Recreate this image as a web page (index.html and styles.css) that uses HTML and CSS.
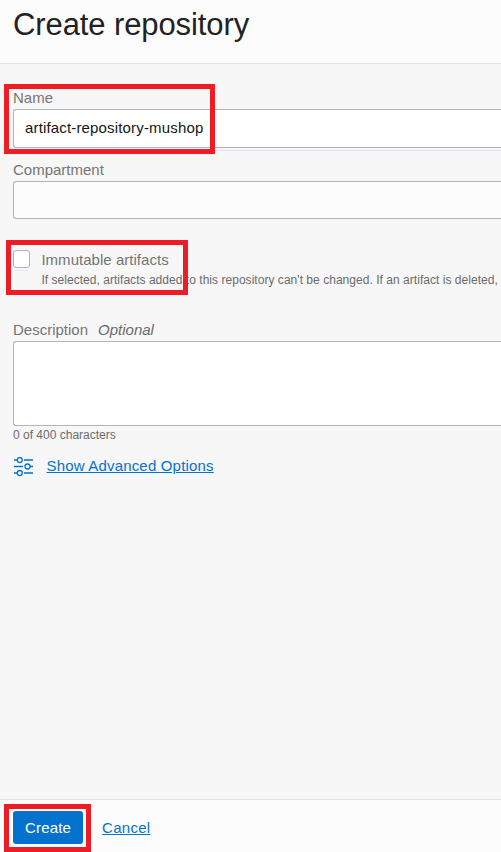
FILE: index.html
```html
<!DOCTYPE html>
<html lang="en">
<head>
<meta charset="utf-8">
<title>Create repository</title>
<link rel="stylesheet" href="styles.css">
</head>
<body>
<div class="panel">
  <header class="header"><h1>Create repository</h1></header>
  <main class="content">
    <label class="label" for="name">Name</label>
    <div class="input-line"><input class="field name" id="name" type="text" value="artifact-repository-mushop"></div>
    <div class="label compartment-label"><span>Compartment</span></div>
    <div class="field compartment"></div>
    <div class="check-row">
      <span class="checkbox"></span>
      <div class="check-copy">
        <div class="label"><span class="check-title">Immutable artifacts</span></div>
        <p class="help">If selected, artifacts added to this repository can't be changed. If an artifact is deleted,</p>
      </div>
    </div>
    <label class="label" for="desc">Description<em>Optional</em></label>
    <textarea class="field description" id="desc"></textarea>
    <p class="count"><span>0 of 400 characters</span></p>
    <div class="advanced">
      <svg width="20" height="20" viewBox="0 0 20 20" fill="none" stroke="#0572ce" stroke-width="1.3">
        <path d="M0 3h3M10 3h9M0 9.500h9M16 9.500h3M0 16h3M10 16h9"/>
        <circle cx="5.800" cy="3" r="2.500"/><circle cx="13.500" cy="9.500" r="2.500"/><circle cx="5.800" cy="16" r="2.500"/>
      </svg>
      <a class="link">Show Advanced Options</a>
    </div>
  </main>
  <footer class="footer">
    <button class="create" type="button"><span>Create</span></button>
    <a class="link">Cancel</a>
  </footer>
  <div class="marker marker-name"></div>
  <div class="marker marker-check"></div>
  <div class="marker marker-create"></div>
</div>
</body>
</html>
```
FILE: styles.css
```css
*, *::before { box-sizing: border-box; }
body { margin: 0; overflow: hidden; font: 15px/18px "Liberation Sans", Arial, sans-serif; color: #706e6b; background: #f7f7f7; }
.panel { position: relative; height: 852px; display: flex; flex-direction: column; overflow: hidden; }
.header { height: 64px; padding: 6px 13px 0; background: #fcfcfc; border-bottom: 1px solid #e3e3e3; }
h1 { margin: 0; font-size: 31px; line-height: 37px; font-weight: 400; letter-spacing: -.1px; color: #222; }
.content { flex: 1; padding: 25px 0 0 13px; white-space: nowrap; }
.label { display: block; height: 20px; color: #757575; }
.label em { margin-left: 10px; color: #6b6b6b; }
.field { display: block; width: 100%; border: 1px solid #aeb4c0; border-right: 0; border-radius: 3px 0 0 3px; background: #fff; }
.input-line { height: 42px; border-bottom: 1px solid #dce5f2; }
.name { height: 39px; padding: 0 11px 2px; font: 15px "Liberation Sans", Arial, sans-serif; letter-spacing: .16px; color: #161616; outline: 0; }
.compartment-label { margin-top: 10px; }
.compartment { height: 38px; background: #fcfcfc; }
.check-row { display: flex; gap: 11px; margin: 31px 0 30px; height: 41px; }
.checkbox { width: 17px; height: 21px; flex: none; background: linear-gradient(#dce9f7, #dce9f7) 2px 20px / 13px 1px no-repeat; }
.checkbox::before { content: ""; display: block; height: 18px; border: 1px solid #aeb4c0; border-radius: 3px; background: #fff; }
.check-copy { padding-left: .4px; }
.check-copy .label { height: 21px; padding-top: 1px; letter-spacing: .03px; }
.help, .count { margin: 0; font-size: 12px; line-height: 18px; color: #6b6b6b; }
.help { letter-spacing: .035px; }
.description { height: 85px; resize: none; outline: 0; }
.advanced { display: flex; align-items: flex-start; gap: 12.5px; margin-top: 13px; }
.advanced svg { margin-left: 1px; }
.link { color: #0572ce; text-decoration: underline; letter-spacing: .18px; }
.footer { height: 53px; display: flex; align-items: flex-start; gap: 19px; padding: 11px 13px 0; background: #fcfcfc; border-top: 1px solid #e3e3e3; }
.footer .link { margin-top: 8px; letter-spacing: .3px; }
.create { width: 70px; height: 33px; padding: 0; border: 0; border-radius: 3px; background: #0572ce; color: #fff; font: 15px "Liberation Sans", Arial, sans-serif; letter-spacing: .16px; }
.marker { position: absolute; border: 5px solid #ee1c25; pointer-events: none; }
.marker-name { left: 4px; top: 84px; width: 211px; height: 70px; }
.marker-check { left: 6px; top: 240px; width: 182px; height: 55px; }
.marker-create { left: 4px; top: 804px; width: 87px; height: 48px; }
```
